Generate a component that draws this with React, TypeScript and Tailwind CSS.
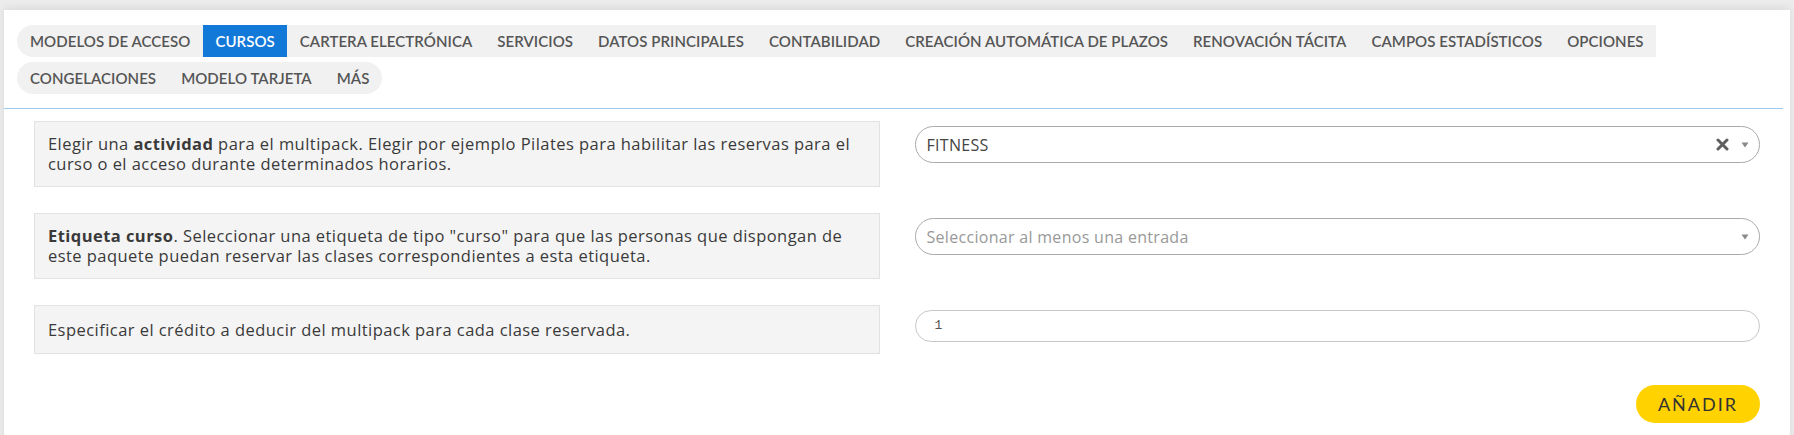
import React from "react";

const tabsRow1 = [
    "Modelos de acceso",
    "Cursos",
    "Cartera electrónica",
    "Servicios",
    "Datos principales",
    "Contabilidad",
    "Creación automática de plazos",
    "Renovación tácita",
    "Campos estadísticos",
    "Opciones",
];

const tabsRow2 = ["Congelaciones", "Modelo tarjeta", "Más"];

const lato = { fontFamily: "Lato, 'Open Sans', sans-serif" };
const openSans = { fontFamily: "'Open Sans', Lato, sans-serif" };

function Tab({ label, active, first, last }: { label: string; active?: boolean; first?: boolean; last?: boolean }) {
    return (
        <div
            className={
                "flex h-[32px] items-center px-[12.5px] text-[15px] font-semibold uppercase tracking-[0.06px] " +
                (active ? "bg-[#1379d9] text-white " : "bg-[#f1f1f1] text-[#555] ") +
                (first ? "rounded-l-full pl-[13px] " : "") +
                (last ? "rounded-r-full pr-[13px] " : "")
            }
        >
            {label}
        </div>
    );
}

function Caret() {
    return (
        <svg width="8" height="6" viewBox="0 0 8 6" className="shrink-0">
            <path d="M0.5 0.5 L7.5 0.5 L4 5.5 Z" fill="#8a8a8a" />
        </svg>
    );
}

function ClearIcon() {
    return (
        <svg width="13" height="13" viewBox="0 0 13 13" className="shrink-0">
            <path d="M2 2 L11 11 M11 2 L2 11" stroke="#5f5f5f" strokeWidth="3" strokeLinecap="round" />
        </svg>
    );
}

function Label({ children, single }: { children: React.ReactNode; single?: boolean }) {
    return (
        <div
            className={
                "border border-[#e2e2e2] bg-[#f4f4f4] px-[13px] text-[16.5px] leading-[20px] tracking-[0.45px] text-[#3a3a3a] " +
                (single ? "flex h-[49px] items-center" : "py-[12px]")
            }
            style={openSans}
        >
            <div className="whitespace-nowrap">{children}</div>
        </div>
    );
}

export default function App() {
    return (
        <div className="min-h-screen bg-[#ececec] px-[4px] pt-[10px]" style={lato}>
            <div className="bg-white shadow-[0_-2px_8px_rgba(0,0,0,0.08)] pb-[40px]">
                {/* tab strip */}
                <div className="mr-[7px] border-b border-[#9dcbf0] px-[13px] pt-[15px] pb-[14px]">
                    <div className="flex flex-col gap-[5px]">
                        <div className="flex">
                            {tabsRow1.map((t, i) => (
                                <Tab key={t} label={t} active={i === 1} first={i === 0} />
                            ))}
                        </div>
                        <div className="flex">
                            {tabsRow2.map((t, i) => (
                                <Tab key={t} label={t} first={i === 0} last={i === tabsRow2.length - 1} />
                            ))}
                        </div>
                    </div>
                </div>

                {/* form */}
                <div className="px-[30px] pt-[12px]">
                    <div className="grid grid-cols-2 gap-x-[35px] gap-y-[26px]">
                        <Label>
                            Elegir una <b className="font-bold">actividad</b> para el multipack. Elegir por ejemplo Pilates para habilitar las reservas para el
                            <br />
                            curso o el acceso durante determinados horarios.
                        </Label>
                        <div className="pt-[5px]">
                            <div className="flex h-[37px] items-center rounded-full border border-[#aaa] pl-[11px] pr-[10px]">
                                <span className="flex-1 text-[16px] tracking-[0.3px] text-[#444]" style={openSans}>
                                    FITNESS
                                </span>
                                <ClearIcon />
                                <span className="ml-[12px]">
                                    <Caret />
                                </span>
                            </div>
                        </div>

                        <Label>
                            <b className="font-bold">Etiqueta curso</b>. Seleccionar una etiqueta de tipo "curso" para que las personas que dispongan de
                            <br />
                            este paquete puedan reservar las clases correspondientes a esta etiqueta.
                        </Label>
                        <div className="pt-[5px]">
                            <div className="flex h-[37px] items-center rounded-full border border-[#aaa] pl-[11px] pr-[10px]">
                                <span className="flex-1 text-[16px] tracking-[0.3px] text-[#999]" style={openSans}>
                                    Seleccionar al menos una entrada
                                </span>
                                <Caret />
                            </div>
                        </div>

                        <Label single>Especificar el crédito a deducir del multipack para cada clase reservada.</Label>
                        <div className="pt-[5px]">
                            <div className="flex h-[32px] items-center rounded-full border border-[#c8c8c8] pl-[19px]">
                                <span className="text-[13px] text-[#555]" style={{ fontFamily: "'Liberation Mono', monospace" }}>
                                    1
                                </span>
                            </div>
                        </div>
                    </div>

                    <div className="mt-[31px] flex justify-end">
                        <button className="h-[38px] w-[124px] rounded-full bg-[#ffd200] text-[18px] tracking-[2px] text-[#333]">
                            AÑADIR
                        </button>
                    </div>
                </div>
            </div>
        </div>
    );
}
